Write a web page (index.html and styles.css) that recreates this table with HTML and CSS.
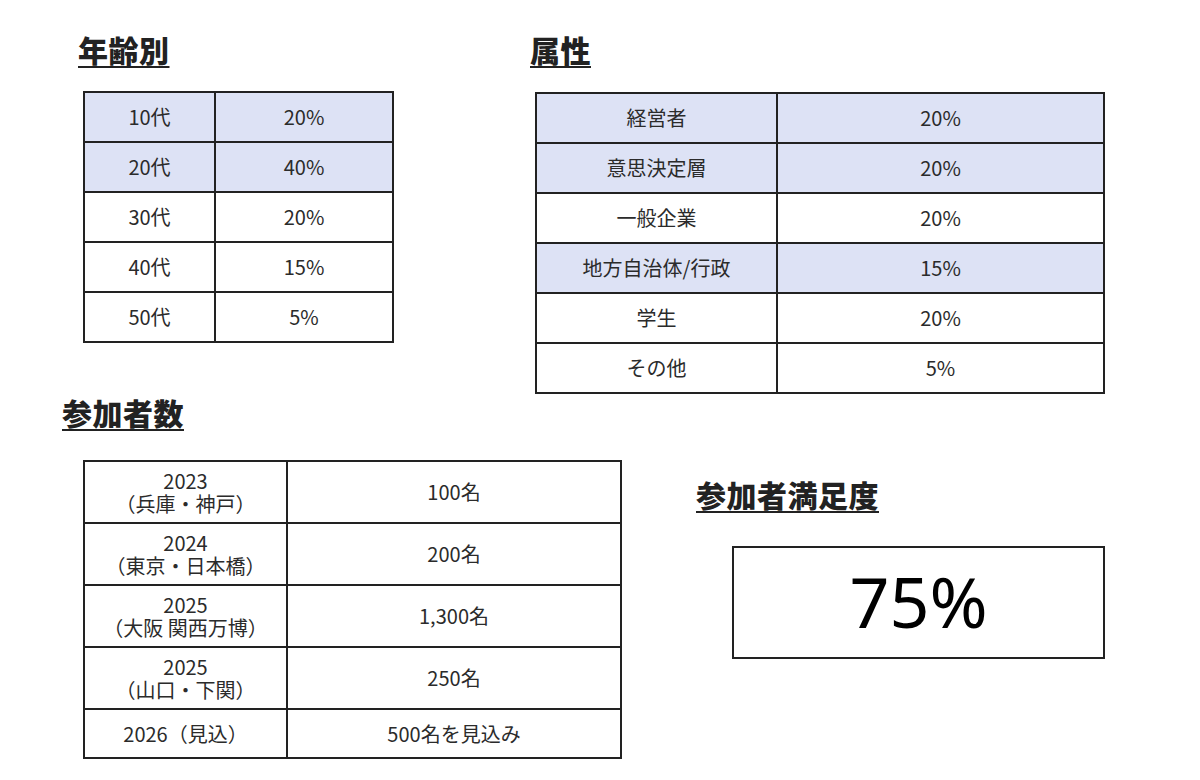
FILE: index.html
```html
<!DOCTYPE html>
<html lang="ja">
<head>
<meta charset="utf-8">
<title>参加者データ</title>
<link rel="stylesheet" href="styles.css">
</head>
<body>
<div class="page">
  <div class="row row-top">
    <section class="sec sec-age">
      <h2 class="title">年齢別</h2>
      <table class="tbl tbl-age">
        <tr class="hl"><td>10代</td><td>20%</td></tr>
        <tr class="hl"><td>20代</td><td>40%</td></tr>
        <tr><td>30代</td><td>20%</td></tr>
        <tr><td>40代</td><td>15%</td></tr>
        <tr><td>50代</td><td>5%</td></tr>
      </table>
    </section>
    <section class="sec sec-attr">
      <h2 class="title">属性</h2>
      <table class="tbl tbl-attr">
        <tr class="hl"><td>経営者</td><td>20%</td></tr>
        <tr class="hl"><td>意思決定層</td><td>20%</td></tr>
        <tr><td>一般企業</td><td>20%</td></tr>
        <tr class="hl"><td>地方自治体/行政</td><td>15%</td></tr>
        <tr><td>学生</td><td>20%</td></tr>
        <tr><td>その他</td><td>5%</td></tr>
      </table>
    </section>
  </div>
  <div class="row row-bottom">
    <section class="sec sec-count">
      <h2 class="title">参加者数</h2>
      <table class="tbl tbl-count">
        <tr><td><span class="l">2023</span><span class="l">（兵庫・神戸）</span></td><td>100名</td></tr>
        <tr><td><span class="l">2024</span><span class="l">（東京・日本橋）</span></td><td>200名</td></tr>
        <tr><td><span class="l">2025</span><span class="l">（大阪 関西万博）</span></td><td>1,300名</td></tr>
        <tr><td><span class="l">2025</span><span class="l">（山口・下関）</span></td><td>250名</td></tr>
        <tr class="short"><td>2026（見込）</td><td>500名を見込み</td></tr>
      </table>
    </section>
    <section class="sec sec-sat">
      <h2 class="title">参加者満足度</h2>
      <div class="big">75%</div>
    </section>
  </div>
</div>
</body>
</html>
```

FILE: styles.css
```css
* { box-sizing: border-box; }
html, body { margin: 0; padding: 0; background: #fff; }
body {
  font-family: "Noto Sans CJK JP", "Noto Sans", sans-serif;
  color: #333;
  width: 1200px;
  height: 780px;
  overflow: hidden;
}
.page { padding-top: 29px; }
.row { display: flex; align-items: flex-start; }
.title {
  margin: 0;
  font-size: 30px;
  line-height: 40px;
  font-weight: 900;
  color: #222;
  text-decoration: underline;
  text-decoration-thickness: 2px;
  text-underline-offset: 4px;
  display: inline-block;
  letter-spacing: 0.5px;
}
.tbl {
  border-collapse: collapse;
  font-family: "Noto Sans CJK JP", "Noto Sans", sans-serif;
  font-size: 20px;
  color: #2b2b2b;
}
.tbl td {
  border: 2px solid #222;
  text-align: center;
  vertical-align: middle;
  padding: 0;
  line-height: 22px;
}
.tbl td .l { display: block; line-height: 23px; }
.tbl tr { height: 50px; }
.tbl tr.hl td { background: #dde2f5; }

.sec-age { margin-left: 78px; width: 452px; }
.tbl-age { margin: 22px 0 0 5px; width: 311px; }
.tbl-age td:first-child { width: 131px; }

.tbl-attr { margin: 23px 0 0 5px; width: 570px; }
.tbl-attr td:first-child { width: 241px; }

.row-bottom { margin-top: -2px; }
.sec-count { margin-left: 62px; width: 634px; }
.tbl-count { margin: 28px 0 0 21px; width: 539px; }
.tbl-count td:first-child { width: 203px; }
.tbl-count tr { height: 62px; }
.tbl-count tr.short { height: 49px; }

.sec-sat { margin-top: 82px; }
.big {
  margin: 32px 0 0 36px;
  width: 373px;
  height: 113px;
  border: 2px solid #222;
  display: flex;
  align-items: center;
  justify-content: center;
  font-family: "Noto Sans", "Open Sans", sans-serif;
  font-size: 70px;
  color: #000;
  padding-bottom: 4px;
}
```
